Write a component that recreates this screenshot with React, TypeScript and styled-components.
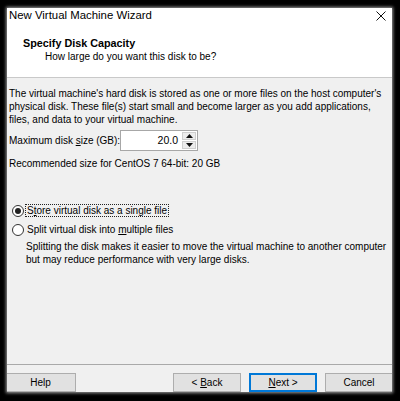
import React from "react";
import styled, { createGlobalStyle } from "styled-components";

const GlobalStyle = createGlobalStyle`
  html, body { margin: 0; padding: 0; background: #000; }
  * { box-sizing: border-box; }
`;

const Frame = styled.div`
  width: 400px;
  height: 401px;
  background: #000;
  padding: 8px 8px 9px 7px;
  font-family: "Liberation Sans", Arial, sans-serif;
  color: #000;
`;

const Window = styled.div`
  width: 100%;
  height: 100%;
  display: flex;
  flex-direction: column;
  overflow: hidden;
  background: #f0f0f0;
  box-shadow: 0 0 3px 1px rgba(210, 210, 210, 0.75);
`;

const TitleBar = styled.div`
  height: 14px;
  background: #fff;
  display: flex;
  align-items: center;
  justify-content: space-between;
  padding: 0 2px 0 2px;
  font-size: 11.4px;
  line-height: 14px;
`;

const CloseIcon = styled.svg`
  width: 10px;
  height: 10px;
  margin-right: 4px;
  margin-top: 1px;
`;

const Header = styled.div`
  background: #fff;
  padding: 15px 0 14px 16px;
  border-bottom: 1px solid #c9c9c9;
`;

const HeaderTitle = styled.div`
  font-weight: bold;
  font-size: 10.8px;
  line-height: 13px;
`;

const HeaderSub = styled.div`
  font-size: 10px;
  line-height: 13px;
  padding-left: 22px;
`;

const Content = styled.div`
  flex: 1;
  display: flex;
  flex-direction: column;
  padding: 9px 0 0 2px;
  font-size: 10px;
  line-height: 13px;
`;

const Paragraph = styled.div`
  white-space: nowrap;
`;

const SizeRow = styled.div`
  margin-top: 4px;
  height: 21px;
  display: flex;
  align-items: center;
`;

const SizeLabel = styled.span`
  width: 111px;
  flex-shrink: 0;
  white-space: nowrap;
`;

const SpinBox = styled.div`
  display: flex;
  flex-shrink: 0;
  width: 78px;
  height: 21px;
  border: 1px solid #a7a7a7;
  background: #fff;
`;

const SpinInput = styled.div`
  flex: 1;
  text-align: right;
  padding-right: 4px;
  line-height: 19px;
  font-size: 10.5px;
`;

const SpinButtons = styled.div`
  width: 15px;
  display: flex;
  flex-direction: column;
  gap: 1px;
  padding: 1px 1px 1px 0;
`;

const SpinButton = styled.div`
  flex: 1;
  background: #ececec;
  border: 1px solid #cfcfcf;
  display: flex;
  align-items: center;
  justify-content: center;
`;

const Recommended = styled.div`
  margin-top: 6px;
`;

const RadioGroup = styled.div`
  margin-top: 33px;
  display: flex;
  flex-direction: column;
  gap: 4px;
`;

const RadioRow = styled.div`
  height: 15px;
  display: flex;
  align-items: center;
  padding-left: 3px;
`;

const RadioCircle = styled.span<{ $checked?: boolean }>`
  width: 12px;
  height: 12px;
  flex-shrink: 0;
  border-radius: 50%;
  border: 1px solid #333;
  background: #fff;
  display: flex;
  align-items: center;
  justify-content: center;
  margin-right: 2px;
  &::after {
    content: "";
    width: 6px;
    height: 6px;
    border-radius: 50%;
    background: #222;
    display: ${(p) => (p.$checked ? "block" : "none")};
  }
`;

const RadioLabel = styled.span<{ $focused?: boolean }>`
  padding: 0 1px;
  line-height: 11px;
  white-space: nowrap;
  outline: ${(p) => (p.$focused ? "1px dotted #222" : "none")};
`;

const Description = styled.div`
  margin-top: 3px;
  padding-left: 17px;
  white-space: nowrap;
`;

const Footer = styled.div`
  border-top: 1px solid #a9a9a9;
  padding-top: 8px;
  margin-right: -1px;
  display: flex;
  font-size: 10px;
`;

const NavGroup = styled.div`
  margin-left: auto;
  display: flex;
  gap: 8px;
`;

const Button = styled.div<{ $default?: boolean }>`
  width: 68px;
  height: 19px;
  flex-shrink: 0;
  background: #e1e1e1;
  border: 1px solid ${(p) => (p.$default ? "#0078d7" : "#adadad")};
  box-shadow: ${(p) => (p.$default ? "inset 0 0 0 1px #0078d7" : "none")};
  display: flex;
  align-items: center;
  justify-content: center;
  line-height: 13px;
  white-space: pre;
`;

const HelpButton = styled(Button)`
  width: 71px;
  margin-left: -2px;
`;

const Key = styled.span`
  text-decoration: underline;
`;

const Arrow = ({ up }: { up?: boolean }) => (
  <svg width="7" height="4" viewBox="0 0 7 4">
    <polygon points={up ? "3.5,0 7,4 0,4" : "0,0 7,0 3.5,4"} fill="#111" />
  </svg>
);

export default function App() {
  return (
    <>
      <GlobalStyle />
      <Frame>
        <Window>
          <TitleBar>
            <span>New Virtual Machine Wizard</span>
            <CloseIcon viewBox="0 0 10 10">
              <path d="M0.5 0.5 L9.5 9.5 M9.5 0.5 L0.5 9.5" stroke="#111" strokeWidth="1" />
            </CloseIcon>
          </TitleBar>
          <Header>
            <HeaderTitle>Specify Disk Capacity</HeaderTitle>
            <HeaderSub>How large do you want this disk to be?</HeaderSub>
          </Header>
          <Content>
            <Paragraph>
              The virtual machine's hard disk is stored as one or more files on the host computer's
              <br />
              physical disk. These file(s) start small and become larger as you add applications,
              <br />
              files, and data to your virtual machine.
            </Paragraph>
            <SizeRow>
              <SizeLabel>
                Maximum disk <Key>s</Key>ize (GB):
              </SizeLabel>
              <SpinBox>
                <SpinInput>20.0</SpinInput>
                <SpinButtons>
                  <SpinButton>
                    <Arrow up />
                  </SpinButton>
                  <SpinButton>
                    <Arrow />
                  </SpinButton>
                </SpinButtons>
              </SpinBox>
            </SizeRow>
            <Recommended>Recommended size for CentOS 7 64-bit: 20 GB</Recommended>
            <RadioGroup>
              <RadioRow>
                <RadioCircle $checked />
                <RadioLabel $focused>
                  S<Key>t</Key>ore virtual disk as a single file
                </RadioLabel>
              </RadioRow>
              <RadioRow>
                <RadioCircle />
                <RadioLabel>
                  Split virtual disk into <Key>m</Key>ultiple files
                </RadioLabel>
              </RadioRow>
            </RadioGroup>
            <Description>
              Splitting the disk makes it easier to move the virtual machine to another computer
              <br />
              but may reduce performance with very large disks.
            </Description>
          </Content>
          <Footer>
            <HelpButton>Help</HelpButton>
            <NavGroup>
              <Button>
                {"< "}
                <Key>B</Key>ack
              </Button>
              <Button $default>
                <Key>N</Key>
                {"ext >"}
              </Button>
              <Button>Cancel</Button>
            </NavGroup>
          </Footer>
        </Window>
      </Frame>
    </>
  );
}
